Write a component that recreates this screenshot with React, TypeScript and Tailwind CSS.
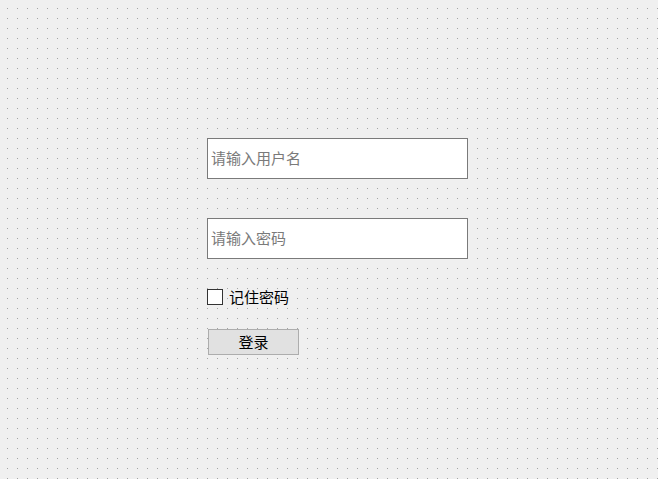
import React from "react";

const font = { fontFamily: '"Noto Sans CJK SC", "Noto Sans", sans-serif' };

function LoginForm() {
  return (
    <div className="flex flex-col pl-[207px] pt-[138px]" style={font}>
      <input
        type="text"
        placeholder="请输入用户名"
        className="h-[41px] w-[261px] border border-[#7a7a7a] bg-white px-[3px] pb-[3px] text-[15px] text-black outline-none placeholder:text-[#7a7a7a]"
      />
      <input
        type="password"
        placeholder="请输入密码"
        className="mt-[39px] h-[41px] w-[261px] border border-[#7a7a7a] bg-white px-[3px] pb-[3px] text-[15px] text-black outline-none placeholder:text-[#7a7a7a]"
      />
      <label className="mt-[30px] flex h-[16px] items-center gap-[6px] text-[15px] leading-none text-black">
        <span className="h-[16px] w-[16px] border border-[#333333] bg-white" />
        <span className="pb-[2px]">记住密码</span>
      </label>
      <button className="ml-px mt-[24px] h-[26px] w-[91px] border border-[#adadad] bg-[#e1e1e1] pb-[2px] text-[15px] leading-none text-black">
        登录
      </button>
    </div>
  );
}

export default function App() {
  return (
    <div className="h-[479px] w-[658px] overflow-hidden bg-[#f0f0f0] bg-[radial-gradient(circle_at_0.5px_0.5px,#a4a4a4_0.75px,transparent_0.75px)] bg-[size:10px_10px] bg-[position:7px_8px]">
      <LoginForm />
    </div>
  );
}
